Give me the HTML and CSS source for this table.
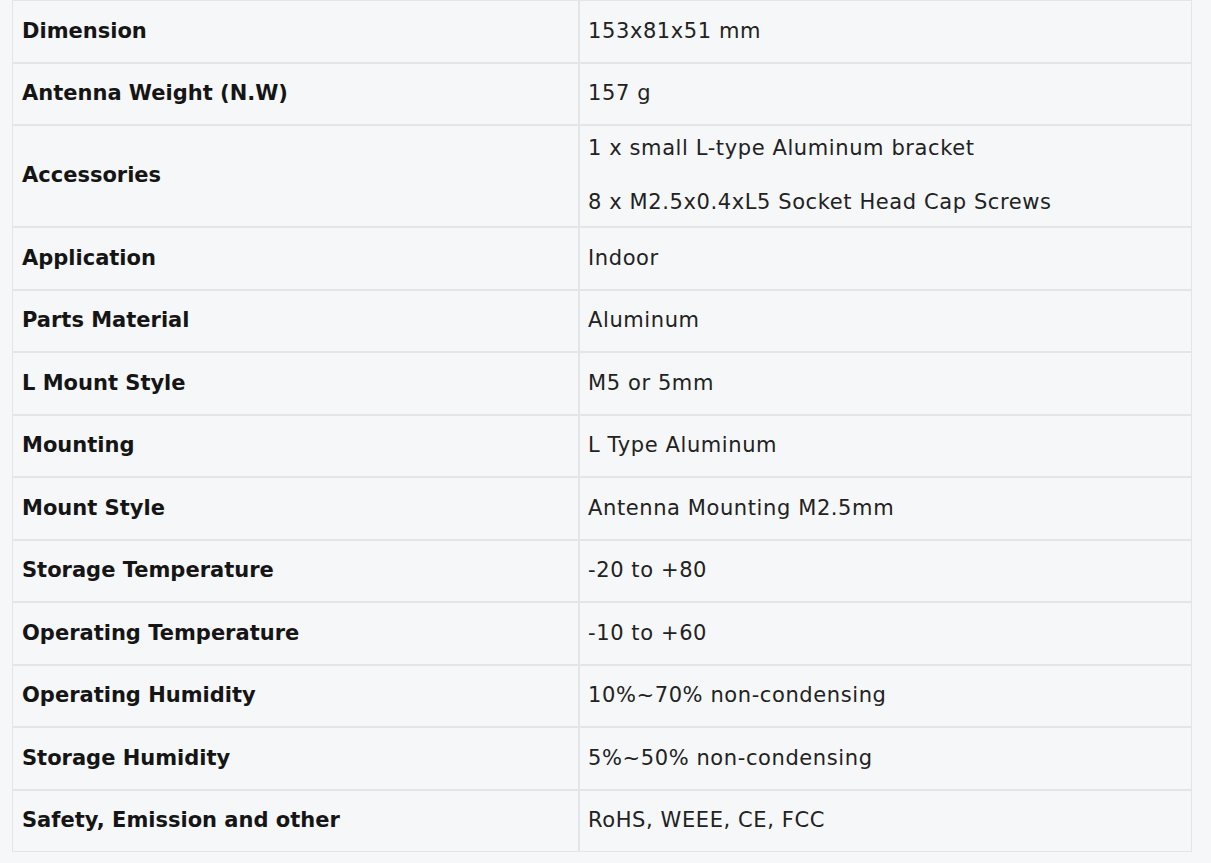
FILE: index.html
```html
<!DOCTYPE html>
<html lang="en">
<head>
<meta charset="utf-8">
<title>Specifications</title>
<link rel="stylesheet" href="styles.css">
</head>
<body>
<table class="spec">
  <tbody>
    <tr><th>Dimension</th><td>153x81x51 mm</td></tr>
    <tr><th>Antenna Weight (N.W)</th><td>157 g</td></tr>
    <tr><th>Accessories</th><td class="multi"><p>1 x small L-type Aluminum bracket</p><p>8 x M2.5x0.4xL5 Socket Head Cap Screws</p></td></tr>
    <tr><th>Application</th><td>Indoor</td></tr>
    <tr><th>Parts Material</th><td>Aluminum</td></tr>
    <tr><th>L Mount Style</th><td>M5 or 5mm</td></tr>
    <tr><th>Mounting</th><td>L Type Aluminum</td></tr>
    <tr><th>Mount Style</th><td>Antenna Mounting M2.5mm</td></tr>
    <tr><th>Storage Temperature</th><td>-20 to +80</td></tr>
    <tr><th>Operating Temperature</th><td>-10 to +60</td></tr>
    <tr><th>Operating Humidity</th><td>10%~70% non-condensing</td></tr>
    <tr><th>Storage Humidity</th><td>5%~50% non-condensing</td></tr>
    <tr><th>Safety, Emission and other</th><td>RoHS, WEEE, CE, FCC</td></tr>
  </tbody>
</table>
</body>
</html>
```
FILE: styles.css
```css
html, body {
  margin: 0;
  padding: 0;
  background: #f6f7f9;
}
body {
  font-family: "DejaVu Sans", Verdana, sans-serif;
  font-size: 21px;
  color: #1d1d1d;
}
.spec {
  margin-left: 12px;
  width: 1180px;
  border-collapse: separate;
  border-spacing: 0;
  table-layout: fixed;
}
.spec th,
.spec td {
  border: 1px solid #e4e5e8;
  padding: 14.5px 9px;
  line-height: 31.5px;
  text-align: left;
  vertical-align: middle;
}
.spec th {
  width: 547px;
  font-weight: bold;
  color: #151515;
}
.spec td {
  padding-left: 8px;
  letter-spacing: 0.6px;
  color: #222;
}
.spec td.multi {
  padding-top: 7.25px;
  padding-bottom: 7.25px;
}
.spec td.multi p {
  margin: 0;
}
.spec td.multi p + p {
  margin-top: 22.5px;
}
```
